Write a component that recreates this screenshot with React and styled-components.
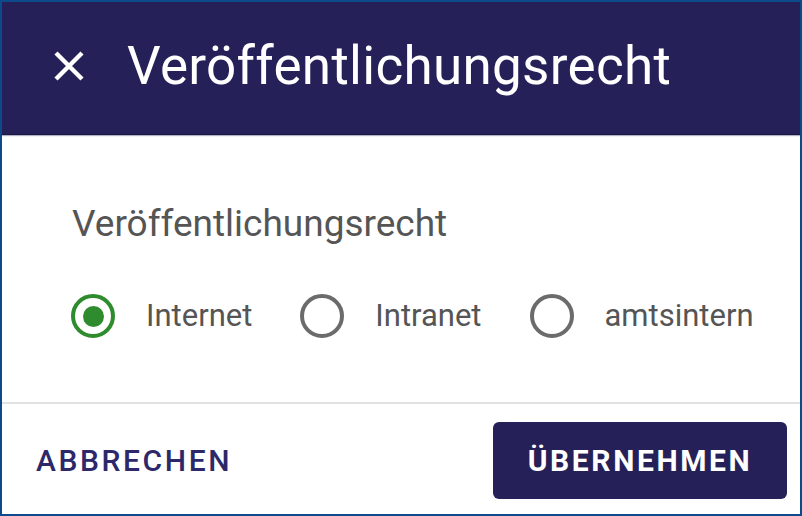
import styled, { createGlobalStyle } from "styled-components";

const GlobalStyle = createGlobalStyle`
  html, body {
    margin: 0;
    padding: 0;
    background: #ffffff;
  }
  * {
    box-sizing: border-box;
  }
`;

const colors = {
  primary: "#262058",
  frame: "#0d4a8b",
  green: "#2e8b2e",
  grey: "#6b6b6b",
  text: "#555555",
  divider: "#e2e2e2",
};

const Dialog = styled.div`
  width: 802px;
  height: 516px;
  border: 2px solid ${colors.frame};
  display: flex;
  flex-direction: column;
  background: #ffffff;
  font-family: Roboto, "Liberation Sans", sans-serif;
  overflow: hidden;
`;

const Header = styled.header`
  height: 132px;
  flex-shrink: 0;
  background: ${colors.primary};
  display: flex;
  align-items: center;
  gap: 43px;
  padding: 0 0 4px 52px;
  box-shadow: 0 1px 0 #1b1745, 0 2px 1px rgba(38, 32, 88, 0.35);
`;

const CloseButton = styled.button`
  display: flex;
  align-items: center;
  justify-content: center;
  width: 30px;
  height: 30px;
  padding: 0;
  border: none;
  background: none;
  cursor: pointer;
`;

const Title = styled.h1`
  margin: 0;
  color: #ffffff;
  font-size: 53px;
  font-weight: 400;
  line-height: 60px;
  letter-spacing: 0.3px;
`;

const Content = styled.section`
  flex: 1;
  display: flex;
  flex-direction: column;
  padding: 68px 0 0 69px;
  gap: 48px;
`;

const Label = styled.div`
  color: ${colors.text};
  font-size: 37px;
  line-height: 44px;
  padding-left: 1px;
`;

const RadioGroup = styled.div`
  display: flex;
  align-items: center;
  gap: 48px;
`;

const RadioOption = styled.label`
  display: flex;
  align-items: center;
  gap: 31px;
  cursor: pointer;
`;

const Circle = styled.span`
  width: 44px;
  height: 44px;
  border-radius: 50%;
  border: 4px solid ${(p) => (p.$checked ? colors.green : colors.grey)};
  display: flex;
  align-items: center;
  justify-content: center;

  &::after {
    content: "";
    width: 21px;
    height: 21px;
    border-radius: 50%;
    background: ${colors.green};
    display: ${(p) => (p.$checked ? "block" : "none")};
  }
`;

const OptionText = styled.span`
  color: ${colors.text};
  font-size: 31px;
  line-height: 36px;
`;

const Divider = styled.hr`
  margin: 0;
  border: none;
  height: 2px;
  background: ${colors.divider};
`;

const Footer = styled.footer`
  height: 110px;
  flex-shrink: 0;
  display: flex;
  align-items: center;
  justify-content: space-between;
  padding: 2px 13px 0 34px;
`;

const TextButton = styled.button`
  border: none;
  background: none;
  padding: 0;
  font-family: inherit;
  font-size: 30px;
  font-weight: 500;
  letter-spacing: 2.6px;
  color: #2c286a;
  cursor: pointer;
`;

const PrimaryButton = styled.button`
  width: 294px;
  height: 77px;
  border: none;
  border-radius: 6px;
  background: ${colors.primary};
  color: #ffffff;
  font-family: inherit;
  font-size: 30px;
  font-weight: 700;
  letter-spacing: 2.6px;
  cursor: pointer;
`;

const CloseIcon = () => (
  <svg width="30" height="30" viewBox="0 0 30 30">
    <path d="M2 2 L28 28 M28 2 L2 28" stroke="#ffffff" strokeWidth="4.4" />
  </svg>
);

const options = [
  { id: "internet", label: "Internet" },
  { id: "intranet", label: "Intranet" },
  { id: "amtsintern", label: "amtsintern" },
];

export default function App() {
  const selected = "internet";
  return (
    <>
      <GlobalStyle />
      <Dialog>
        <Header>
          <CloseButton aria-label="Schließen">
            <CloseIcon />
          </CloseButton>
          <Title>Veröffentlichungsrecht</Title>
        </Header>
        <Content>
          <Label>Veröffentlichungsrecht</Label>
          <RadioGroup>
            {options.map((o) => (
              <RadioOption key={o.id}>
                <Circle $checked={o.id === selected} />
                <OptionText>{o.label}</OptionText>
              </RadioOption>
            ))}
          </RadioGroup>
        </Content>
        <Divider />
        <Footer>
          <TextButton>ABBRECHEN</TextButton>
          <PrimaryButton>ÜBERNEHMEN</PrimaryButton>
        </Footer>
      </Dialog>
    </>
  );
}
